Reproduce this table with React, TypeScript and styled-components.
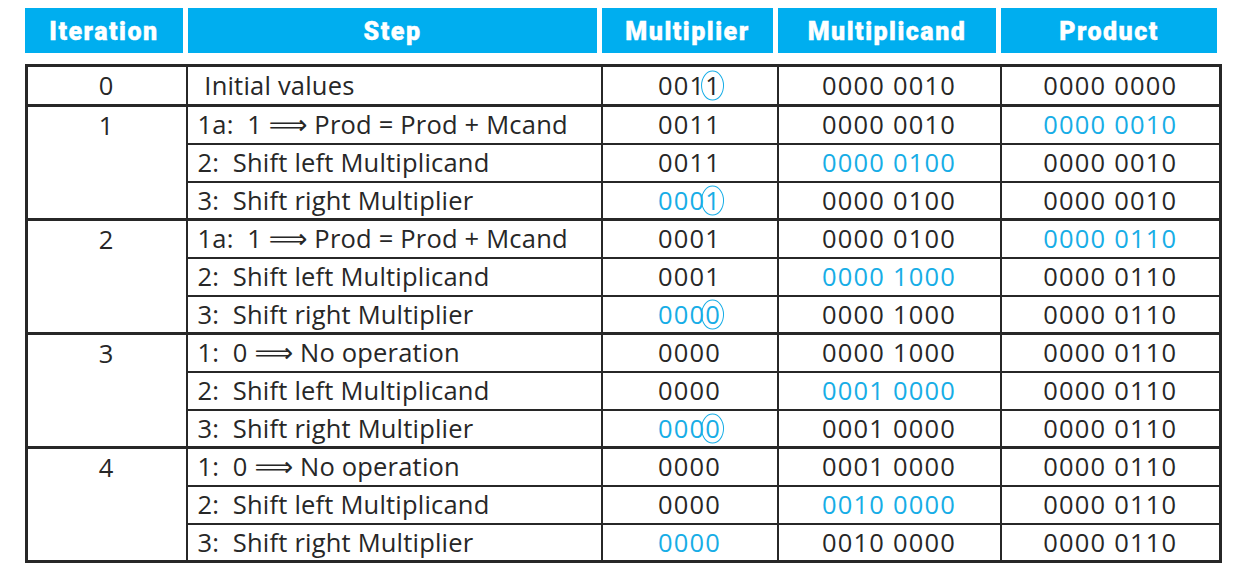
import styled, { createGlobalStyle } from "styled-components";

const GlobalStyle = createGlobalStyle`
    html, body {
        margin: 0;
        padding: 0;
        background: #ffffff;
    }
`;

const BLUE = "#17ade6";
const INK = "#272727";

const Page = styled.div`
    padding: 8px 0 0 25px;
    width: 1194px;
    font-family: "Open Sans", "Noto Sans", sans-serif;
`;

const HeaderRow = styled.div`
    display: grid;
    grid-template-columns: 158px 409px 171px 218px 216px;
    column-gap: 5px;
    height: 45px;
`;

const HeaderCell = styled.div`
    background: #00aeef;
    color: #ffffff;
    display: flex;
    align-items: center;
    justify-content: center;
    padding-top: 1px;
    font-family: "Roboto", "Liberation Sans", sans-serif;
    font-weight: 900;
    font-size: 25px;
    letter-spacing: 1.5px;
    -webkit-text-stroke: 0.4px #ffffff;
`;

const Table = styled.table`
    margin-top: 11px;
    width: 1194px;
    border-collapse: collapse;
    table-layout: fixed;
    border: 3px solid ${INK};
    color: ${INK};
    font-size: 25.5px;
    font-weight: 400;
    letter-spacing: 1.2px;
`;

const Row = styled.tr`
    height: 38px;
`;

const Cell = styled.td<{ $align?: "left" | "center"; $blue?: boolean; $group?: boolean }>`
    border-left: 2px solid ${INK};
    border-right: 2px solid ${INK};
    border-top: ${(p) => (p.$group ? "3px" : "2px")} solid ${INK};
    border-bottom: 2px solid ${INK};
    padding: 0 0 0 ${(p) => (p.$align === "left" ? "10px" : "0")};
    text-align: ${(p) => p.$align || "center"};
    vertical-align: middle;
    white-space: pre;
    line-height: 1;
    color: ${(p) => (p.$blue ? BLUE : INK)};
`;

const StepCell = styled(Cell)`
    letter-spacing: 0.2px;
`;

const IterCell = styled(Cell)`
    vertical-align: top;
    line-height: 37px;
`;

const Arrow = styled.span`
    font-family: "DejaVu Sans", sans-serif;
    font-size: 27px;
    letter-spacing: 0;
`;

const Circled = styled.span`
    position: relative;
    &::after {
        content: "";
        position: absolute;
        left: 50%;
        top: 50%;
        width: 21px;
        height: 28px;
        transform: translate(-52%, -48%);
        border: 1.8px solid ${BLUE};
        border-radius: 50%;
    }
`;

type Step = {
    step: string;
    mp: string;
    mc: string;
    pr: string;
    blue?: "mp" | "mc" | "pr";
    circle?: boolean;
};

type Group = { iter: string; steps: Step[] };

const data: Group[] = [
    {
        iter: "0",
        steps: [{ step: " Initial values", mp: "0011", mc: "0000 0010", pr: "0000 0000", circle: true }],
    },
    {
        iter: "1",
        steps: [
            { step: "1a:  1 => Prod = Prod + Mcand", mp: "0011", mc: "0000 0010", pr: "0000 0010", blue: "pr" },
            { step: "2:  Shift left Multiplicand", mp: "0011", mc: "0000 0100", pr: "0000 0010", blue: "mc" },
            { step: "3:  Shift right Multiplier", mp: "0001", mc: "0000 0100", pr: "0000 0010", blue: "mp", circle: true },
        ],
    },
    {
        iter: "2",
        steps: [
            { step: "1a:  1 => Prod = Prod + Mcand", mp: "0001", mc: "0000 0100", pr: "0000 0110", blue: "pr" },
            { step: "2:  Shift left Multiplicand", mp: "0001", mc: "0000 1000", pr: "0000 0110", blue: "mc" },
            { step: "3:  Shift right Multiplier", mp: "0000", mc: "0000 1000", pr: "0000 0110", blue: "mp", circle: true },
        ],
    },
    {
        iter: "3",
        steps: [
            { step: "1:  0 => No operation", mp: "0000", mc: "0000 1000", pr: "0000 0110" },
            { step: "2:  Shift left Multiplicand", mp: "0000", mc: "0001 0000", pr: "0000 0110", blue: "mc" },
            { step: "3:  Shift right Multiplier", mp: "0000", mc: "0001 0000", pr: "0000 0110", blue: "mp", circle: true },
        ],
    },
    {
        iter: "4",
        steps: [
            { step: "1:  0 => No operation", mp: "0000", mc: "0001 0000", pr: "0000 0110" },
            { step: "2:  Shift left Multiplicand", mp: "0000", mc: "0010 0000", pr: "0000 0110", blue: "mc" },
            { step: "3:  Shift right Multiplier", mp: "0000", mc: "0010 0000", pr: "0000 0110", blue: "mp" },
        ],
    },
];

// "=>" in the data stands for the long double arrow, drawn in its own font
function StepText({ text }: { text: string }) {
    const parts = text.split(" => ");
    if (parts.length === 1) return <>{text}</>;
    return (
        <>
            {parts[0]} <Arrow>{"\u27f9"}</Arrow> {parts[1]}
        </>
    );
}

function MultiplierValue({ value, circle }: { value: string; circle?: boolean }) {
    if (!circle) return <>{value}</>;
    return (
        <>
            {value.slice(0, -1)}
            <Circled>{value.slice(-1)}</Circled>
        </>
    );
}

export default function App() {
    return (
        <Page>
            <GlobalStyle />
            <HeaderRow>
                <HeaderCell>Iteration</HeaderCell>
                <HeaderCell>Step</HeaderCell>
                <HeaderCell>Multiplier</HeaderCell>
                <HeaderCell>Multiplicand</HeaderCell>
                <HeaderCell>Product</HeaderCell>
            </HeaderRow>
            <Table>
                <colgroup>
                    <col style={{ width: 160 }} />
                    <col style={{ width: 415 }} />
                    <col style={{ width: 176 }} />
                    <col style={{ width: 223 }} />
                    <col style={{ width: 220 }} />
                </colgroup>
                <tbody>
                    {data.map((group) =>
                        group.steps.map((s, i) => (
                            <Row key={group.iter + "-" + i}>
                                {i === 0 && (
                                    <IterCell rowSpan={group.steps.length} $group>
                                        {group.iter}
                                    </IterCell>
                                )}
                                <StepCell $align="left" $group={i === 0}>
                                    <StepText text={s.step} />
                                </StepCell>
                                <Cell $blue={s.blue === "mp"} $group={i === 0}>
                                    <MultiplierValue value={s.mp} circle={s.circle} />
                                </Cell>
                                <Cell $blue={s.blue === "mc"} $group={i === 0}>
                                    {s.mc}
                                </Cell>
                                <Cell $blue={s.blue === "pr"} $group={i === 0}>
                                    {s.pr}
                                </Cell>
                            </Row>
                        )),
                    )}
                </tbody>
            </Table>
        </Page>
    );
}
